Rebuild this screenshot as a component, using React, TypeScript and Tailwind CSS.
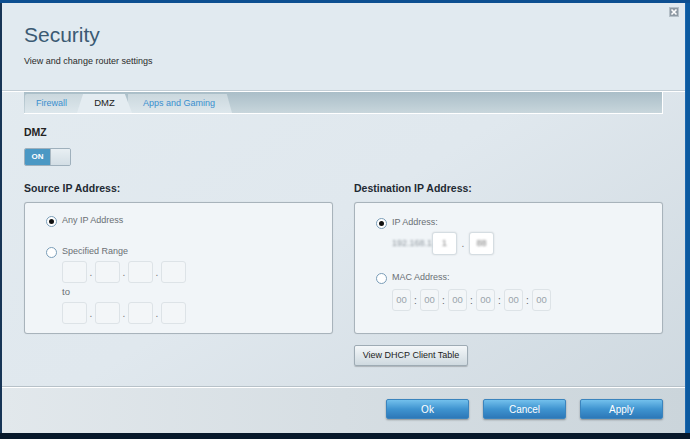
import React from "react";

function Radio({ checked }: { checked?: boolean }) {
  return (
    <span className="w-[11px] h-[11px] rounded-full border border-[#7a9db8] bg-white flex items-center justify-center shrink-0">
      {checked && <span className="w-[5px] h-[5px] rounded-full bg-[#111]" />}
    </span>
  );
}

function Box({ w = 25, h = 22, children, white }: { w?: number; h?: number; children?: React.ReactNode; white?: boolean }) {
  return (
    <span
      className={`rounded-[3px] border flex items-center justify-center text-[9.5px] text-[#9aa4ab] ${white ? "bg-white border-[#d5dde2] shadow-[0_0_2px_rgba(0,0,0,0.12)]" : "bg-[#f3f6f8] border-[#dde3e7]"}`}
      style={{ width: w, height: h }}
    >
      {children}
    </span>
  );
}

function IpRow() {
  return (
    <div className="flex items-end">
      <Box />
      <span className="text-[10px] text-[#777] w-[8px] text-center leading-none mb-[5px]">.</span>
      <Box />
      <span className="text-[10px] text-[#777] w-[8px] text-center leading-none mb-[5px]">.</span>
      <Box />
      <span className="text-[10px] text-[#777] w-[8px] text-center leading-none mb-[5px]">.</span>
      <Box />
    </div>
  );
}

function BlueBtn({ label }: { label: string }) {
  return (
    <button className="w-[83px] h-[20px] rounded-[2px] bg-gradient-to-b from-[#72c0ec] via-[#3f94d0] to-[#2d78b8] text-white text-[10px] shadow-[0_1px_2px_rgba(0,0,0,0.35)] border border-[#3b84bd]">
      {label}
    </button>
  );
}

export default function App() {
  const font = { fontFamily: '"Liberation Sans", Arial, sans-serif' };
  return (
    <div className="w-[690px] h-[439px] overflow-hidden flex flex-col bg-[#0b4c8c]" style={font}>
      <div className="h-[3px] bg-[#0d4f91] shrink-0" />
      <div className="flex h-[430px] shrink-0">
        <div className="w-[2px] bg-[#173556]" />
        <div className="w-[683px] h-full flex flex-col bg-gradient-to-br from-[#e3ebf0] via-[#e0e8ee] to-[#cdd7de] relative">
          {/* close */}
          <div className="absolute right-[6px] top-[4px] w-[10px] h-[10px] bg-[#8e9aa4] border border-[#b5c0c8] flex items-center justify-center">
            <svg width="8" height="8" viewBox="0 0 8 8">
              <path d="M1.5 1.5 L6.5 6.5 M6.5 1.5 L1.5 6.5" stroke="#fff" strokeWidth="1.6" />
            </svg>
          </div>
          {/* header */}
          <div className="h-[88px] shrink-0 bg-[#e1eaf0] px-[22px] pt-[20px] border-b border-[#c3ced6]">
            <div className="text-[21px] leading-[24px] text-[#3b5a73]">Security</div>
            <div className="text-[9px] text-[#2a2a2a] mt-[8px]">View and change router settings</div>
          </div>
          <div className="h-[1px] bg-white shrink-0" />
          {/* tabs */}
          <div className="mx-[22px] h-[22px] shrink-0 bg-gradient-to-b from-[#aabec8] to-[#c8d6dc] border-b border-r border-white flex items-end pl-[1px]">
            <div className="relative h-[19px] w-[58px] rounded-tl-[2px] bg-gradient-to-b from-[#cbd8de] to-[#dde7ec] flex items-center pl-[11px] text-[9px] text-[#3a8fcf]">
              Firewall
            </div>
            <div className="relative z-10 -ml-[6px] h-[19px] w-[55px] [clip-path:polygon(11%_0,87%_0,100%_100%,0_100%)] bg-[#e4ecf1] flex items-center justify-center text-[9.5px] text-[#222]">
              DMZ
            </div>
            <div className="relative -ml-[4px] h-[19px] w-[104px] [clip-path:polygon(0_0,95%_0,100%_100%,0_100%)] bg-gradient-to-b from-[#cbd8de] to-[#dde7ec] flex items-center pl-[15px] text-[9px] text-[#3a8fcf]">
              Apps and Gaming
            </div>
          </div>
          {/* body */}
          <div className="px-[22px] flex-1 flex flex-col">
            <div className="text-[10.5px] font-bold text-[#222] mt-[12px] leading-[13px]">DMZ</div>
            <div className="mt-[9px] w-[47px] h-[18px] flex rounded-[2px] border border-[#9fb0bc] overflow-hidden">
              <div className="w-[25px] bg-[#4b98c4] text-white text-[8px] font-bold flex items-center justify-center">ON</div>
              <div className="flex-1 bg-gradient-to-b from-[#e8eff3] to-[#d3dee5] border-l border-[#a9b8c2]" />
            </div>
            <div className="flex gap-[21px] mt-[16px]">
              {/* source */}
              <div className="w-[310px]">
                <div className="text-[10.5px] font-bold text-[#1f2a33] leading-[13px]">Source IP Address:</div>
                <div className="mt-[7px] h-[132px] rounded-[3px] border border-[#a8b3bb] bg-[#f1f5f8] pl-[21px] pt-[12px] shadow-[0_0_1px_rgba(0,0,0,0.15)]">
                  <div className="flex items-center gap-[5px] h-[12px]">
                    <Radio checked />
                    <span className="text-[9px] text-[#6a6f74]">Any IP Address</span>
                  </div>
                  <div className="flex items-center gap-[5px] h-[12px] mt-[19px]">
                    <Radio />
                    <span className="text-[9px] text-[#6a6f74]">Specified Range</span>
                  </div>
                  <div className="ml-[16px] mt-[3px]">
                    <IpRow />
                    <div className="text-[9.5px] text-[#6a6f74] leading-[12px] mt-[3px]">to</div>
                    <div className="mt-[4px]">
                      <IpRow />
                    </div>
                  </div>
                </div>
              </div>
              {/* destination */}
              <div className="w-[310px] flex flex-col">
                <div className="text-[10.5px] font-bold text-[#1f2a33] leading-[13px]">Destination IP Address:</div>
                <div className="mt-[7px] h-[132px] rounded-[3px] border border-[#a8b3bb] bg-[#f1f5f8] pl-[21px] pt-[14px] shadow-[0_0_1px_rgba(0,0,0,0.15)]">
                  <div className="flex items-center gap-[5px] h-[12px]">
                    <Radio checked />
                    <span className="text-[9px] text-[#6a6f74]">IP Address:</span>
                  </div>
                  <div className="flex items-center ml-[16px] mt-[3px]">
                    <span className="text-[9px] text-[#8c959c] blur-[1.2px] w-[40px]">192.168.1</span>
                    <Box w={25} h={23} white>
                      <span className="blur-[1px] text-[#888]">1</span>
                    </Box>
                    <span className="text-[10px] text-[#777] w-[12px] text-center">.</span>
                    <Box w={25} h={23} white>
                      <span className="blur-[1.2px] text-[#777] text-[9px]">88</span>
                    </Box>
                  </div>
                  <div className="flex items-center gap-[5px] h-[12px] mt-[17px]">
                    <Radio />
                    <span className="text-[9px] text-[#6a6f74]">MAC Address:</span>
                  </div>
                  <div className="flex items-center ml-[16px] mt-[5px]">
                    {[0, 1, 2, 3, 4, 5].map((i) => (
                      <React.Fragment key={i}>
                        {i > 0 && <span className="text-[10px] text-[#666] w-[9px] text-center">:</span>}
                        <Box w={19} h={22}>00</Box>
                      </React.Fragment>
                    ))}
                  </div>
                </div>
                <button className="mt-[11px] w-[114px] h-[21px] rounded-[2px] border border-[#9eabb4] bg-gradient-to-b from-[#f4f7f9] to-[#cfdae0] text-[9px] text-[#222] shadow-[0_1px_1px_rgba(0,0,0,0.2)]">
                  View DHCP Client Table
                </button>
              </div>
            </div>
          </div>
          {/* footer */}
          <div className="h-[1px] bg-[#b7c1c8] shrink-0" />
          <div className="h-[1px] bg-white shrink-0" />
          <div className="h-[45px] shrink-0 flex items-start justify-end gap-[14px] pr-[22px] pt-[11px] bg-gradient-to-r from-[#e2e8ec] via-[#d6dee3] to-[#cbd5db]">
            <BlueBtn label="Ok" />
            <BlueBtn label="Cancel" />
            <BlueBtn label="Apply" />
          </div>
        </div>
        <div className="w-[5px] bg-[#0c5aa0] border-l border-[#1a66ad]" />
      </div>
      <div className="flex-1 bg-[#07182a]" />
    </div>
  );
}
